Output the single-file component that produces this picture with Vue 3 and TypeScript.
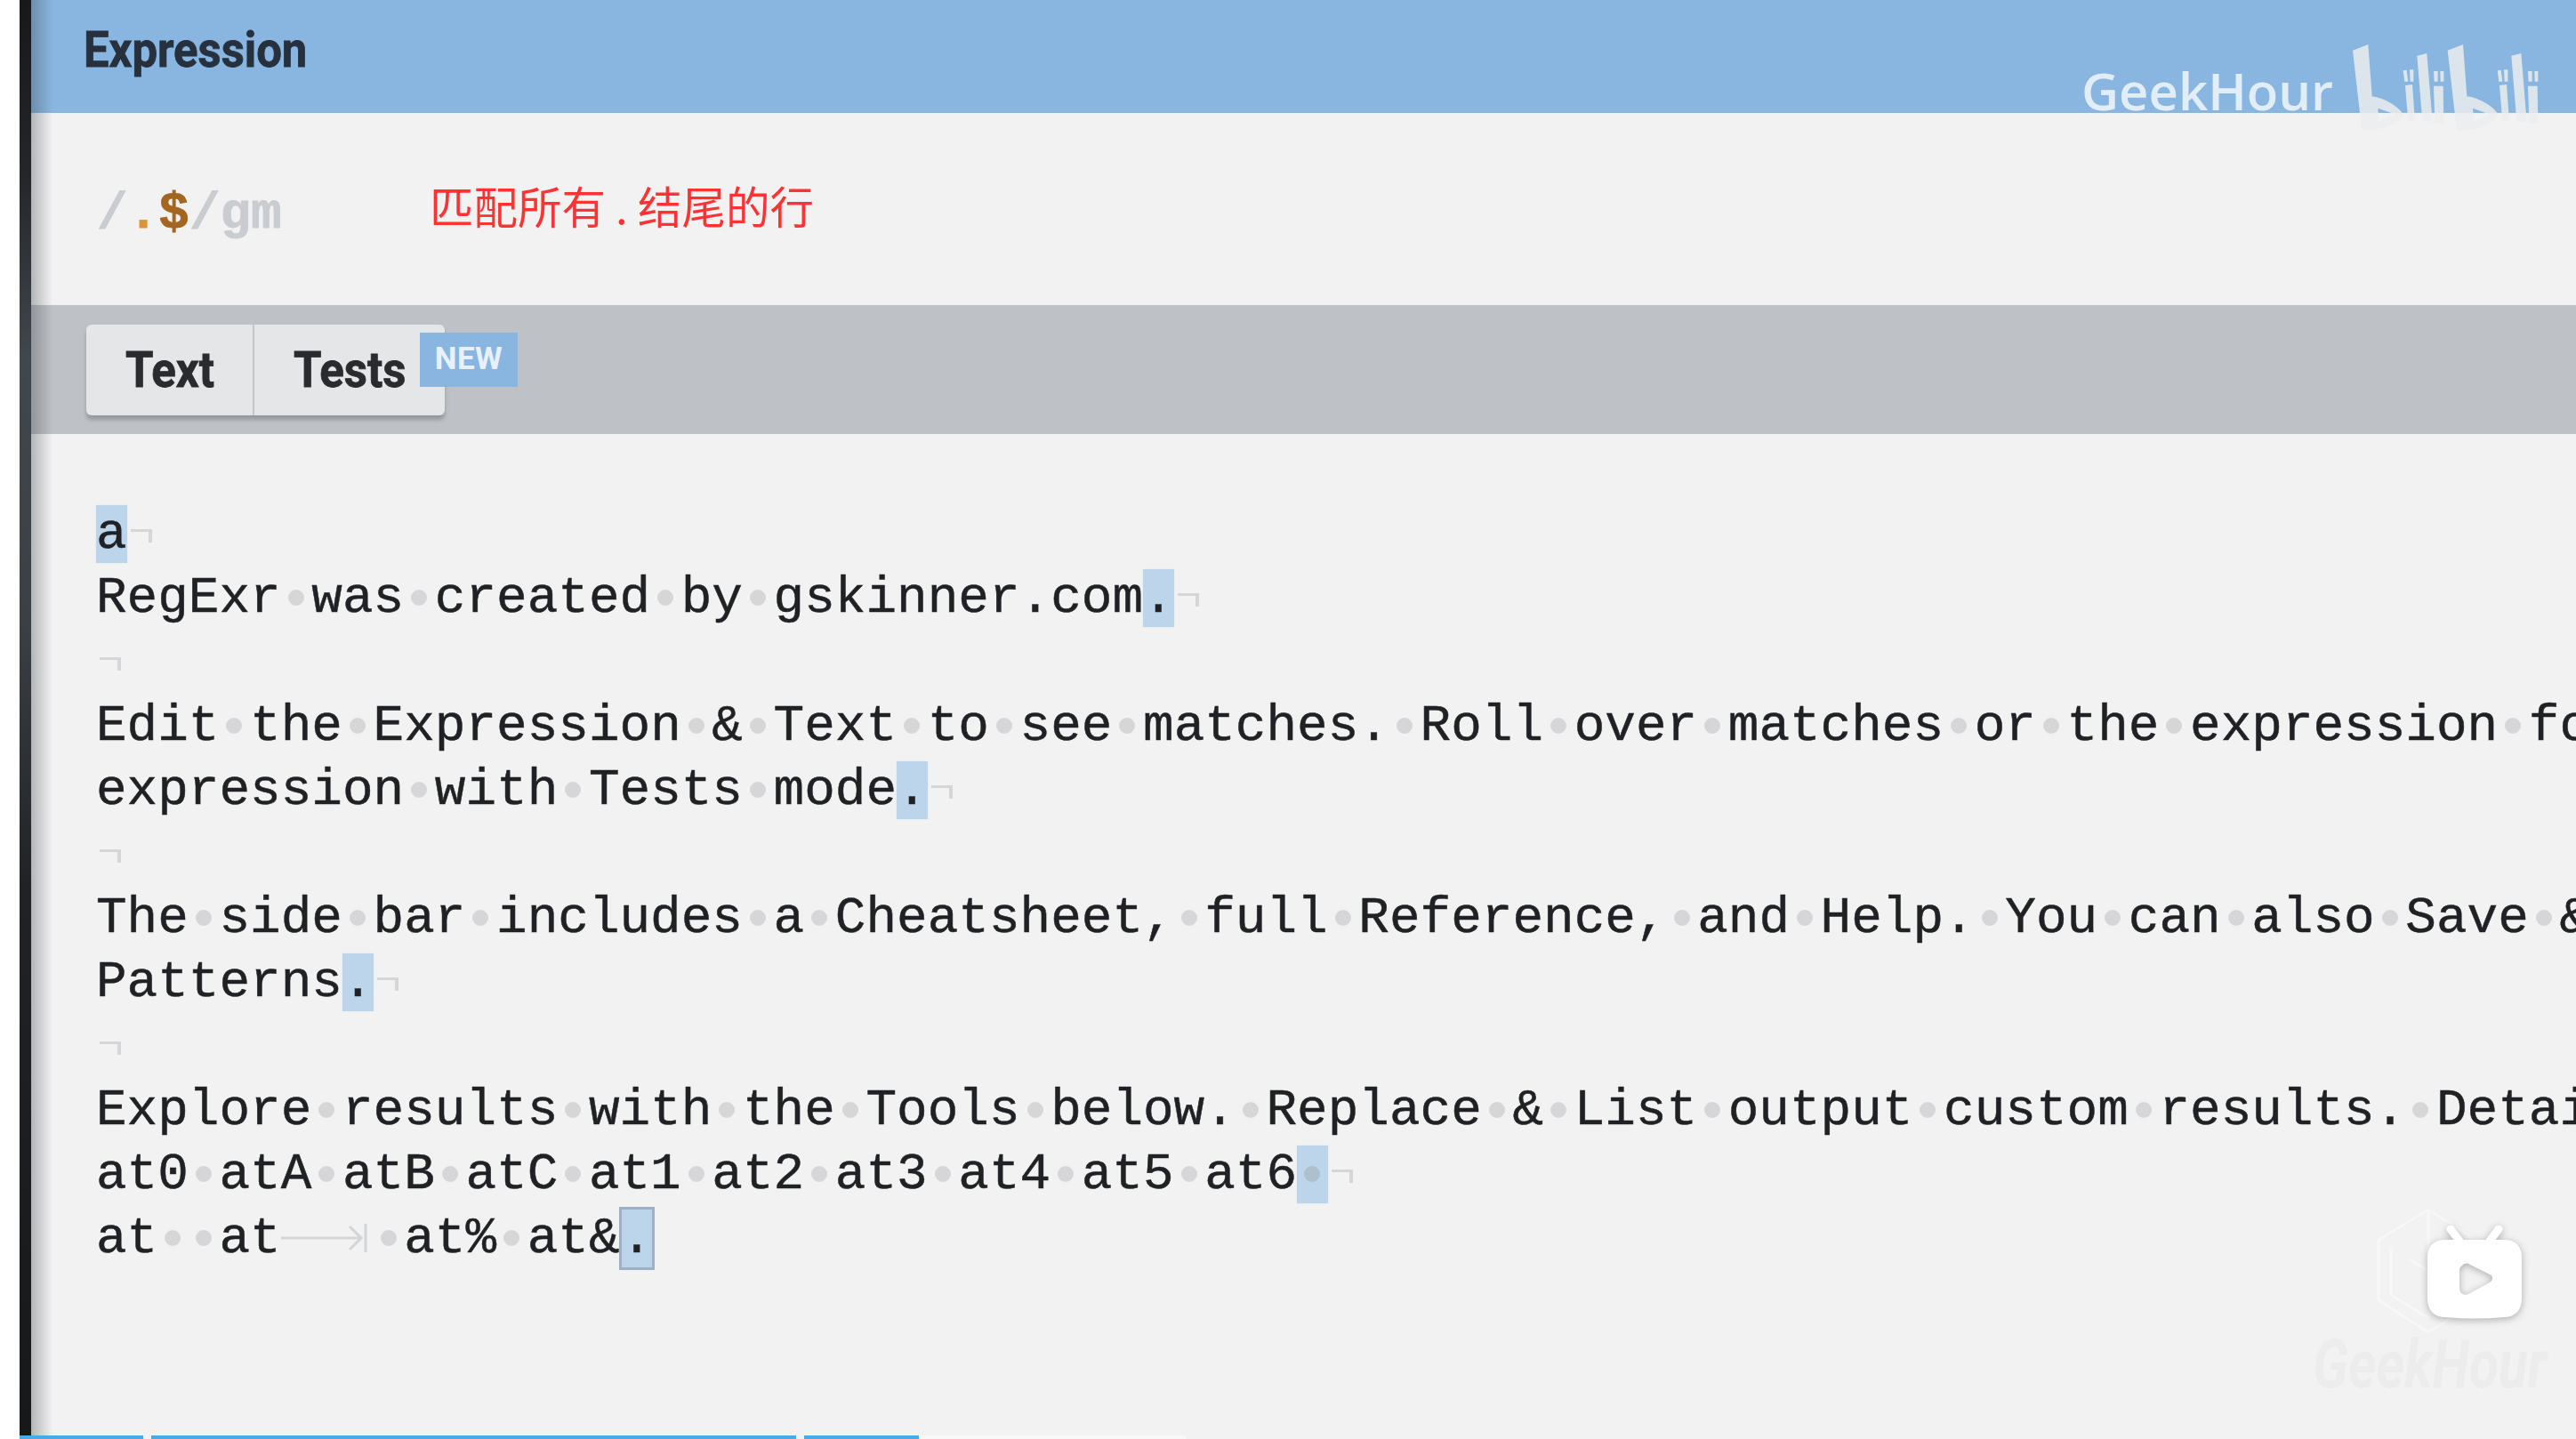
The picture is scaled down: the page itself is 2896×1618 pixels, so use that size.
<script setup lang="ts">
interface Seg { kind: 'text' | 'space' | 'tab' | 'hl' | 'hlspace' | 'sel'; value: string }
interface Row { segs: Seg[]; eol: boolean }

const source: { text: string; tail?: 'hl' | 'sel'; eol?: boolean }[] = [
  { text: 'a', tail: 'hl' },
  { text: 'RegExr was created by gskinner.com.', tail: 'hl' },
  { text: '' },
  { text: 'Edit the Expression & Text to see matches. Roll over matches or the expression for details. PCRE & JavaScript' },
  { text: 'expression with Tests mode.', tail: 'hl' },
  { text: '' },
  { text: 'The side bar includes a Cheatsheet, full Reference, and Help. You can also Save & Share with the Community' },
  { text: 'Patterns.', tail: 'hl' },
  { text: '' },
  { text: 'Explore results with the Tools below. Replace & List output custom results. Details lists capture groups.' },
  { text: 'at0 atA atB atC at1 at2 at3 at4 at5 at6 ', tail: 'hl' },
  { text: 'at  at\t at% at&.', tail: 'sel', eol: false }
]

function toRow(line: { text: string; tail?: 'hl' | 'sel'; eol?: boolean }): Row {
  const body = line.tail ? line.text.slice(0, -1) : line.text
  const segs: Seg[] = []
  for (const part of body.split(/([ \t])/)) {
    if (part === ' ') segs.push({ kind: 'space', value: ' ' })
    else if (part === '\t') segs.push({ kind: 'tab', value: '' })
    else if (part) segs.push({ kind: 'text', value: part })
  }
  if (line.tail) {
    const last = line.text.slice(-1)
    if (line.tail === 'sel') segs.push({ kind: 'sel', value: last })
    else segs.push({ kind: last === ' ' ? 'hlspace' : 'hl', value: last })
  }
  return { segs, eol: line.eol !== false }
}

const rows: Row[] = source.map(toRow)
</script>

<template>
  <div class="screen">
    <div class="gutter"></div>
    <div class="edge"></div>
    <main class="app">
      <header class="title"><h1>Expression</h1></header>
      <section class="regex">
        <div class="pattern"><span class="slash">/</span><span class="dot">.</span><span class="dollar">$</span><span class="slash">/gm</span></div>
        <div class="note">匹配所有 . 结尾的行</div>
      </section>
      <nav class="tabs">
        <div class="tabgroup">
          <div class="tab tab-text"><span class="label">Text</span></div>
          <div class="tab tab-tests"><span class="label">Tests</span><span class="new">NEW</span></div>
        </div>
      </nav>
      <section class="editor">
        <div v-for="(row, i) in rows" :key="i" class="line">
          <template v-for="(seg, j) in row.segs" :key="j">
            <span v-if="seg.kind === 'text'">{{ seg.value }}</span>
            <span v-else-if="seg.kind === 'space'" class="sp"> </span>
            <span v-else-if="seg.kind === 'hlspace'" class="mark"><span class="sp in-mark"> </span></span>
            <span v-else-if="seg.kind === 'hl'" class="mark">{{ seg.value }}</span>
            <span v-else-if="seg.kind === 'sel'" class="mark selected">{{ seg.value }}</span>
            <span v-else class="tabchar">
              <svg width="97" height="32" viewBox="0 0 97 32" fill="none" stroke="#d4d5d7" stroke-width="3">
                <path d="M0 16H90M77 3 90 16 77 29M95 0V32" />
              </svg>
            </span>
          </template>
          <span v-if="row.eol" class="eol"></span>
        </div>
      </section>
      <div class="progress">
        <span class="seg s1"></span><span class="seg s2"></span><span class="seg s3"></span><span class="seg s4"></span>
      </div>
    </main>

    <div class="wm-top">
      <span class="wm-name">GeekHour</span>
      <svg class="wm-bili" width="240" height="110" viewBox="0 0 720 330" fill="#eceeef">
        <g>
          <path fill-rule="evenodd" d="M45 50 97 30 110 205C150 210 195 235 215 265 205 295 160 318 80 322L76 322ZM130 245 133 288 186 265Z" />
          <path d="M215 118 227 116 232 155 220 155ZM237 115 250 115 250 155 239 155ZM222 168 246 165 255 290 232 290ZM262 68 295 60 314 290 280 290ZM318 120 332 120 332 155 320 155ZM340 120 352 120 352 155 341 155ZM318 170 350 170 352 296 322 296Z" />
        </g>
        <g transform="translate(320 0)">
          <path fill-rule="evenodd" d="M45 50 97 30 110 205C150 210 195 235 215 265 205 295 160 318 80 322L76 322ZM130 245 133 288 186 265Z" />
          <path d="M215 118 227 116 232 155 220 155ZM237 115 250 115 250 155 239 155ZM222 168 246 165 255 290 232 290ZM262 68 295 60 314 290 280 290ZM318 120 332 120 332 155 320 155ZM340 120 352 120 352 155 341 155ZM318 170 350 170 352 296 322 296Z" transform="translate(-2 0)" />
        </g>
      </svg>
    </div>

    <div class="wm-bottom">
      <svg class="hex" width="110" height="142" viewBox="0 0 110 142" fill="none" stroke="#f7f7f8" stroke-width="3">
        <path d="M58 2 2 36V104L58 140 108 108M58 2 108 34M16 44V98L58 124M58 2V60M36 58 60 72" />
      </svg>
      <svg class="tv" width="110" height="106" viewBox="0 0 110 106">
        <path d="M28 4 40 20M82 4 70 20" stroke="#fff" stroke-width="9" stroke-linecap="round" />
        <path fill="#fff" fill-rule="evenodd" d="M22 16H88C102 16 108 24 108 36V82C108 96 100 103 88 103 66 105 44 105 22 103 10 103 2 96 2 82V36C2 24 8 16 22 16ZM41 45C38 47 38 49 38 52V70C38 77 44 80 50 76L72 64C76 61 76 57 72 55L50 44C47 42 44 42 41 45Z" />
      </svg>
      <div class="wm-italic">GeekHour</div>
    </div>
  </div>
</template>

<style>
html, body { margin: 0; background: #fff; }
</style>

<style scoped>
.screen {
  position: relative;
  display: flex;
  width: 2896px;
  height: 1618px;
  overflow: hidden;
  background: #fff;
}
.gutter { flex: 0 0 22px; }
.edge {
  flex: 0 0 13px;
  background: linear-gradient(#17181a 0, #24262a 200px, #41474e 400px, #3b4046 700px, #202225 1000px, #17181a 1618px);
}
.app {
  position: relative;
  flex: 1;
  min-width: 0;
  display: flex;
  flex-direction: column;
  background: #f2f2f3;
}
.app::after {
  content: "";
  position: absolute;
  inset: 0 auto 0 0;
  width: 24px;
  background: linear-gradient(90deg, rgba(60, 64, 70, 0.34), rgba(60, 64, 70, 0));
  pointer-events: none;
}
.title {
  flex: 0 0 127px;
  background: #88b6e0;
  padding-left: 59px;
  box-sizing: border-box;
}
.title h1 {
  margin: 0;
  padding-top: 21px;
  font: 700 56px/70px Roboto, sans-serif;
  color: #26313d;
  transform: scaleX(0.907);
  transform-origin: left;
  -webkit-text-stroke: 0.8px #26313d;
  filter: blur(0.5px);
}
.regex {
  flex: 0 0 216px;
  display: flex;
  align-items: center;
  padding-left: 74px;
  box-sizing: border-box;
}
.pattern {
  width: 374px;
  font: 700 57.7px/70px "Liberation Mono", monospace;
  padding-top: 11px;
  -webkit-text-stroke: 0.8px currentColor;
  filter: blur(0.5px);
}
.slash { color: #c9ccd0; }
.dot { color: #dc9534; }
.dollar { color: #a4651f; }
.note {
  font: 400 49.5px/60px "Noto Sans CJK SC", sans-serif;
  color: #ff3333;
  margin-top: -8px;
}
.tabs {
  flex: 0 0 145px;
  background: #bec1c6;
  padding: 22px 0 0 62px;
  box-sizing: border-box;
}
.tabgroup {
  display: flex;
  width: 403px;
  height: 102px;
  border-radius: 6px;
  background: #e5e6e8;
  box-shadow: 0 5px 4px rgba(110, 114, 120, 0.5);
}
.tab {
  position: relative;
  box-sizing: border-box;
  font: 700 56px/102px Roboto, sans-serif;
  color: #2a2b2e;
  padding-left: 44px;
}
.label {
  display: inline-block;
  transform: scaleX(0.91);
  transform-origin: left;
  -webkit-text-stroke: 0.8px #2a2b2e;
  filter: blur(0.5px);
}
.tab-text { flex: 0 0 189px; border-right: 2px solid #c4c6ca; }
.tab-tests { flex: 1; }
.new {
  position: absolute;
  left: 186px;
  top: 9px;
  width: 110px;
  height: 61px;
  background: #88b6e0;
  color: #e8f1fb;
  font: 700 35px/60px Roboto, sans-serif;
  text-align: center;
  letter-spacing: 0.5px;
}
.editor {
  flex: 1;
  padding: 77px 0 0 73px;
  overflow: hidden;
}
.line {
  height: 72px;
  font: 400 57.7px/72px "Liberation Mono", monospace;
  color: #1f2124;
  white-space: pre;
  -webkit-text-stroke: 0.5px #1f2124;
  filter: blur(0.5px);
}
.sp {
  position: relative;
  display: inline-block;
  width: 0.6em;
  height: 0;
}
.sp::after {
  content: "";
  position: absolute;
  left: 8px;
  bottom: 7px;
  width: 18px;
  height: 18px;
  border-radius: 50%;
  background: #d6d6d8;
}
.in-mark::after { background: #aebfce; }
.mark {
  background: #bdd5ea;
  box-shadow: 0 0 2px #d9e8f5;
}
.selected {
  border: 3px solid #9fb0c4;
  margin: 0 -3px -3px -1px;
  box-shadow: none;
}
.tabchar {
  position: relative;
  display: inline-block;
  width: 1.8em;
  height: 0;
}
.tabchar svg { position: absolute; left: 0; bottom: 0; }
.eol {
  display: inline-block;
  box-sizing: border-box;
  width: 24px;
  height: 15px;
  margin-left: 4px;
  border-top: 3px solid #d6d6d8;
  border-right: 4px solid #d6d6d8;
  vertical-align: 6px;
}
.progress {
  position: absolute;
  left: -13px;
  bottom: 0;
  display: flex;
  height: 4px;
  z-index: 1;
}
.seg { display: block; background: #4baae6; }
.s1 { width: 139px; margin-right: 9px; }
.s2 { width: 725px; margin-right: 9px; }
.s3 { width: 129px; }
.s4 { width: 300px; background: #f8f8f8; }
.wm-top {
  position: absolute;
  left: 2340px;
  top: 50px;
  width: 520px;
  height: 94px;
}
.wm-name {
  position: absolute;
  left: 0;
  top: 12px;
  font: 600 58px/80px "Open Sans", sans-serif;
  color: rgba(255, 255, 255, 0.75);
}
.wm-bili { position: absolute; left: 290px; top: -10px; opacity: 0.85; }
.wm-bottom {
  position: absolute;
  left: 2600px;
  top: 1358px;
  width: 270px;
  height: 210px;
}
.hex { position: absolute; left: 72px; top: 0; }
.tv {
  position: absolute;
  left: 127px;
  top: 20px;
  filter: drop-shadow(0 2px 4px rgba(90, 90, 90, 0.45));
}
.wm-italic {
  position: absolute;
  left: 0;
  top: 132px;
  font: italic 700 76px/88px Roboto, sans-serif;
  color: #ececed;
  transform: scaleX(0.795);
  transform-origin: left;
  white-space: nowrap;
}
</style>
